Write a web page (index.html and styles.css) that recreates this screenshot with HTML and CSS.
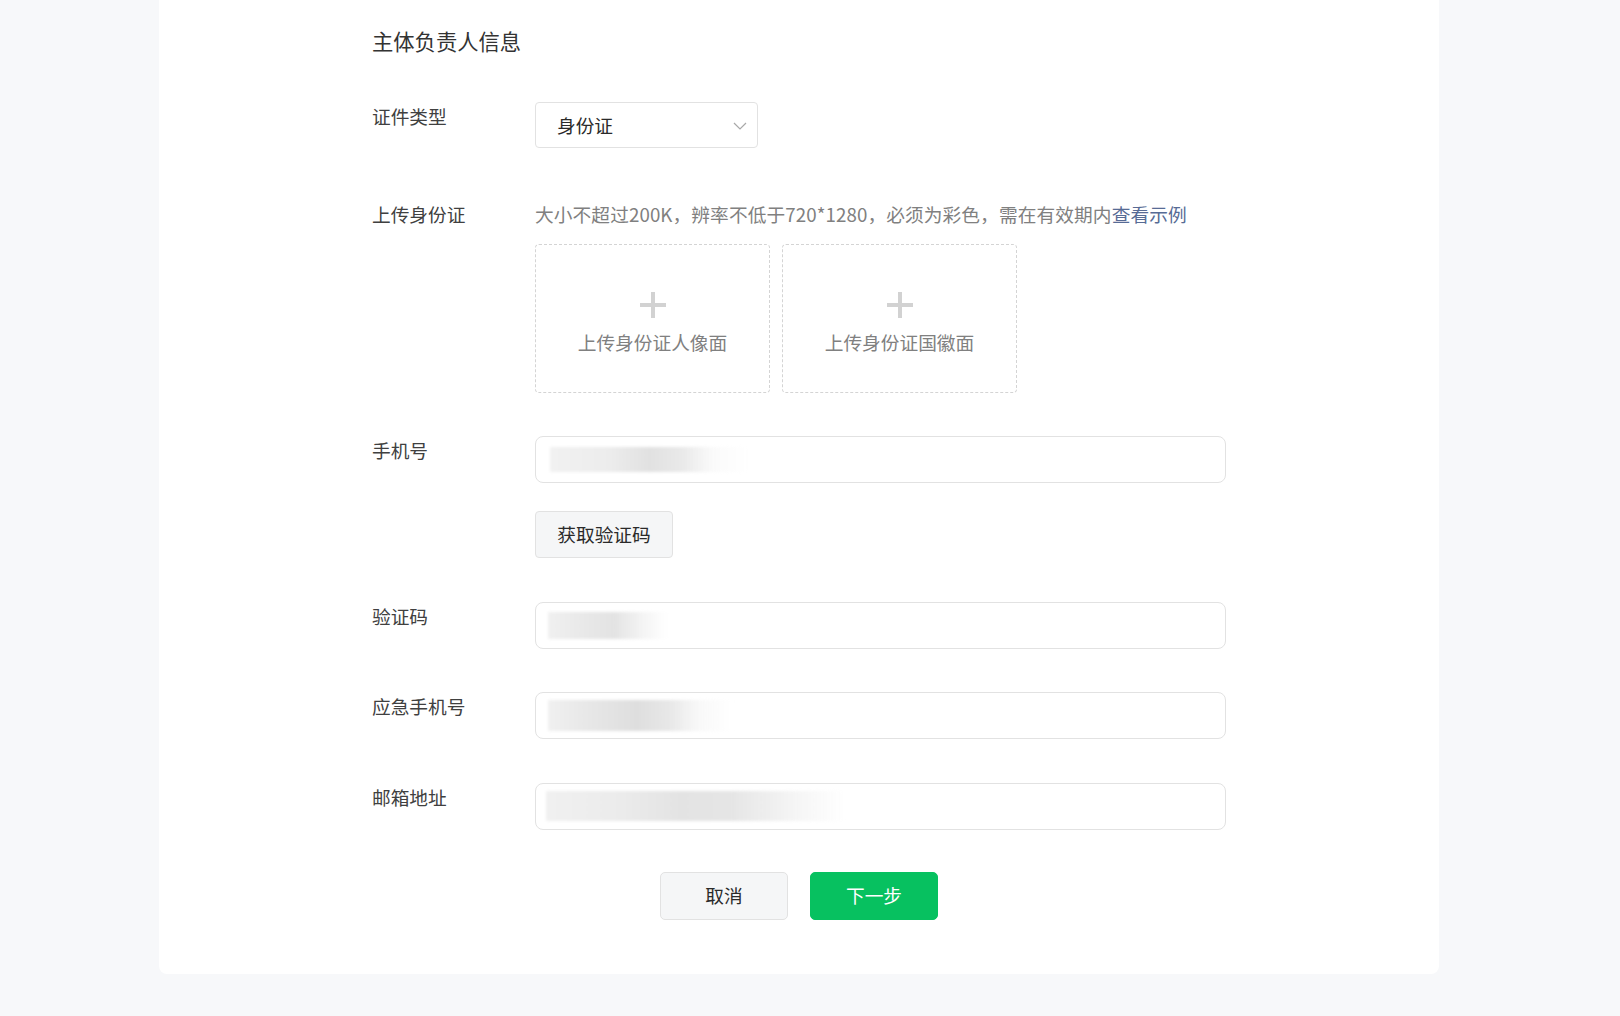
FILE: index.html
```html
<!DOCTYPE html>
<html lang="zh-CN">
<head>
<meta charset="utf-8">
<title>主体负责人信息</title>
<link rel="stylesheet" href="styles.css">
</head>
<body>
<div class="page">
  <div class="card">
    <h2 class="section-title">主体负责人信息</h2>

    <div class="form">
      <div class="form-item item-type">
        <div class="label">证件类型</div>
        <div class="control">
          <div class="select">
            <span class="select-value">身份证</span>
            <svg class="chevron" width="14" height="8" viewBox="0 0 14 8"><polyline points="1,1 7,7 13,1" fill="none" stroke="#a8a8a8" stroke-width="1.2"/></svg>
          </div>
        </div>
      </div>

      <div class="form-item item-upload">
        <div class="label">上传身份证</div>
        <div class="control">
          <div class="hint">大小不超过200K，辨率不低于720*1280，必须为彩色，需在有效期内<a class="link" href="#">查看示例</a></div>
          <div class="uploads">
            <div class="upload-box">
              <svg class="plus" width="26" height="26" viewBox="0 0 26 26"><rect x="11" y="0" width="4" height="26" fill="#d2d2d2"/><rect x="0" y="11" width="26" height="4" fill="#d2d2d2"/></svg>
              <span class="upload-text">上传身份证人像面</span>
            </div>
            <div class="upload-box">
              <svg class="plus" width="26" height="26" viewBox="0 0 26 26"><rect x="11" y="0" width="4" height="26" fill="#d2d2d2"/><rect x="0" y="11" width="26" height="4" fill="#d2d2d2"/></svg>
              <span class="upload-text">上传身份证国徽面</span>
            </div>
          </div>
        </div>
      </div>

      <div class="form-item item-phone">
        <div class="label">手机号</div>
        <div class="control">
          <div class="input"><span class="blur blur-phone"></span></div>
          <button class="btn btn-code" type="button">获取验证码</button>
        </div>
      </div>

      <div class="form-item item-gap">
        <div class="label">验证码</div>
        <div class="control">
          <div class="input"><span class="blur blur-code"></span></div>
        </div>
      </div>

      <div class="form-item item-gap">
        <div class="label">应急手机号</div>
        <div class="control">
          <div class="input"><span class="blur blur-emergency"></span></div>
        </div>
      </div>

      <div class="form-item item-gap">
        <div class="label">邮箱地址</div>
        <div class="control">
          <div class="input"><span class="blur blur-mail"></span></div>
        </div>
      </div>
    </div>

    <div class="actions">
      <button class="btn btn-default" type="button">取消</button>
      <button class="btn btn-primary" type="button">下一步</button>
    </div>
  </div>
</div>
</body>
</html>
```

FILE: styles.css
```css
* { box-sizing: border-box; }

html, body {
  margin: 0;
  padding: 0;
  background: #f7f8fa;
}

body {
  font-family: "Noto Sans CJK SC", "Noto Sans", "Liberation Sans", sans-serif;
  color: #3a3a3a;
  width: 1620px;
  height: 1016px;
  overflow: hidden;
}

.page {
  padding-left: 159px;
}

.card {
  width: 1280px;
  background: #ffffff;
  border-radius: 0 0 8px 8px;
  padding: 26px 0 54px 213px;
}

.section-title {
  margin: 0 0 46px 0;
  font-size: 21.3px;
  line-height: 30px;
  font-weight: normal;
  color: #333333;
}

.form-item {
  display: flex;
  align-items: flex-start;
}

.label {
  width: 163px;
  flex: none;
  font-size: 18.7px;
  line-height: 28px;
  color: #404040;
}

.control {
  display: flex;
  flex-direction: column;
  align-items: flex-start;
}

.item-upload { margin-top: 52px; }
.item-phone { margin-top: 43px; }
.item-gap { margin-top: 43.5px; }

/* select */
.select {
  width: 223px;
  height: 46px;
  border: 1px solid #e2e2e2;
  border-radius: 4px;
  display: flex;
  align-items: center;
  justify-content: space-between;
  padding: 0 10px 2px 21px;
  font-size: 18.7px;
  color: #2a2a2a;
}

.chevron { margin-top: 4px; }

/* upload */
.hint {
  font-size: 18.7px;
  line-height: 28px;
  color: #808080;
  white-space: nowrap;
  letter-spacing: 0.1px;
}

.link {
  color: #576b95;
  text-decoration: none;
}

.uploads {
  display: flex;
  gap: 12px;
  margin-top: 16px;
}

.upload-box {
  width: 235px;
  height: 149px;
  border: 1px dashed #d4d4d4;
  border-radius: 4px;
  display: flex;
  flex-direction: column;
  align-items: center;
  justify-content: center;
  gap: 11px;
  padding-top: 9px;
}

.plus { display: block; }

.upload-text {
  font-size: 18.7px;
  line-height: 26px;
  color: #808080;
}

/* inputs */
.input {
  width: 691px;
  height: 47px;
  border: 1px solid #e2e2e2;
  border-radius: 8px;
  display: flex;
  align-items: center;
  padding-left: 12px;
}

.blur {
  display: block;
  border-radius: 1px;
  filter: blur(1.5px);
}

.blur-phone {
  width: 200px;
  height: 25px;
  margin-left: 2px;
  background: linear-gradient(90deg, #f1f1f1 0%, #ececec 30%, #e1e1e1 50%, #e9e9e9 66%, rgba(248,248,248,0.6) 82%, rgba(255,255,255,0) 100%);
}

.blur-code {
  width: 120px;
  height: 27px;
  background: linear-gradient(90deg, #f0f0f0 0%, #e6e6e6 40%, #e3e3e3 55%, rgba(240,240,240,0.7) 80%, rgba(255,255,255,0) 100%);
}

.blur-emergency {
  width: 185px;
  height: 31px;
  background: linear-gradient(90deg, #f0f0f0 0%, #e6e6e6 25%, #dedede 48%, #e8e8e8 66%, rgba(245,245,245,0.6) 82%, rgba(255,255,255,0) 100%);
}

.blur-mail {
  width: 300px;
  height: 30px;
  margin-left: -2px;
  background: linear-gradient(90deg, #f0f0f0 0%, #ebebeb 25%, #e3e3e3 45%, #e5e5e5 62%, rgba(240,240,240,0.7) 82%, rgba(255,255,255,0) 100%);
}

/* buttons */
.btn {
  font-family: "Noto Sans CJK SC", "Noto Sans", "Liberation Sans", sans-serif;
  font-size: 18.7px;
  line-height: 26px;
  border-radius: 5px;
  cursor: pointer;
  padding: 0 0 2px 0;
}

.btn-code {
  margin-top: 28px;
  width: 138px;
  height: 47px;
  background: #f5f6f7;
  border: 1px solid #e2e2e2;
  border-radius: 4px;
  color: #2a2a2a;
}

.actions {
  display: flex;
  gap: 22px;
  margin-top: 42.5px;
  margin-left: -213px;
  justify-content: center;
}

.btn-default {
  width: 128px;
  height: 48px;
  background: #f5f6f7;
  border: 1px solid #e2e2e2;
  color: #2a2a2a;
}

.btn-primary {
  width: 128px;
  height: 48px;
  background: #07c160;
  border: 1px solid #07c160;
  color: #ffffff;
}
```
